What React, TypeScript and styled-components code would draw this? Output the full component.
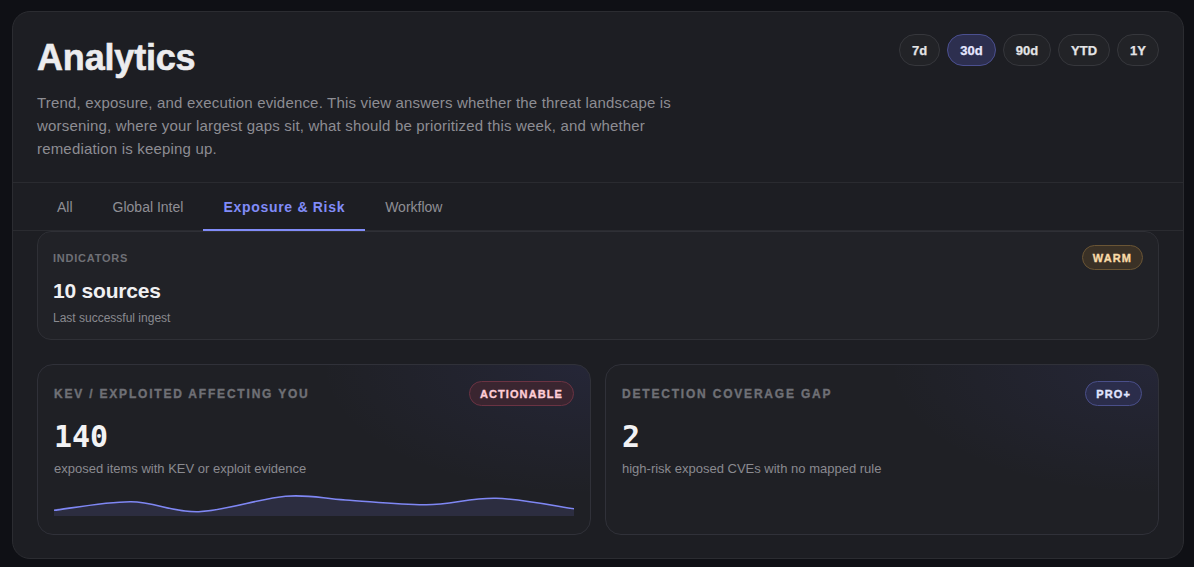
import React from "react";
import styled, { createGlobalStyle } from "styled-components";

const GlobalStyle = createGlobalStyle`
  * { box-sizing: border-box; }
  html, body { margin: 0; padding: 0; background: #0f1015; }
  body {
    font-family: "Liberation Sans", Arial, Helvetica, sans-serif;
    color: #e8e8ea;
    -webkit-font-smoothing: antialiased;
  }
`;

const Page = styled.div`
  padding: 11px 10px 8px 12px;
`;

const Panel = styled.section`
  background: #1d1e23;
  border: 1px solid #2b2c31;
  border-radius: 18px;
  overflow: hidden;
`;

const Header = styled.header`
  display: flex;
  justify-content: space-between;
  align-items: flex-start;
  padding: 22px 24px 22px 24px;
  border-bottom: 1px solid #2a2b30;
`;

const TitleBlock = styled.div`
  margin-top: 4px;
`;

const Title = styled.h1`
  margin: 0;
  font-size: 36px;
  line-height: 40px;
  font-weight: 800;
  letter-spacing: -0.005em;
  color: #ececee;
  -webkit-text-stroke: 0.6px #ececee;
`;

const Lead = styled.p`
  margin: 13px 0 0 0;
  max-width: 680px;
  font-size: 15px;
  line-height: 23px;
  letter-spacing: 0.012em;
  color: #8d8d93;
`;

const Ranges = styled.div`
  display: flex;
  gap: 7px;
`;

const RangeButton = styled.button<{ $active?: boolean }>`
  height: 32px;
  padding: 0 12px;
  border-radius: 16px;
  font-family: inherit;
  font-size: 13px;
  font-weight: 700;
  color: ${(p) => (p.$active ? "#e6e7ff" : "#e4e4e6")};
  -webkit-text-stroke: 0.25px currentColor;
  background: ${(p) => (p.$active ? "#2d2f4f" : "#222327")};
  border: 1px solid ${(p) => (p.$active ? "#4b5090" : "#36373c")};
  cursor: pointer;
`;

const TabBar = styled.nav`
  display: flex;
  padding: 0 24px;
  border-bottom: 1px solid #2a2b30;
`;

const Tab = styled.button<{ $active?: boolean }>`
  padding: 15px 20px 13px 20px;
  margin-bottom: -1px;
  background: none;
  border: none;
  border-bottom: 2px solid ${(p) => (p.$active ? "#818cf8" : "transparent")};
  font-family: inherit;
  font-size: 14px;
  line-height: 18px;
  font-weight: ${(p) => (p.$active ? 700 : 400)};
  letter-spacing: ${(p) => (p.$active ? "0.05em" : "0")};
  color: ${(p) => (p.$active ? "#818cf8" : "#8f8f95")};
  cursor: pointer;
`;

const Content = styled.div`
  display: flex;
  flex-direction: column;
  gap: 24px;
  padding: 0 24px 23px 24px;
`;

const IndicatorCard = styled.div`
  background: #212227;
  border: 1px solid #2f3036;
  border-radius: 14px;
  padding: 13px 15px 13px 15px;
`;

const CardHead = styled.div`
  display: flex;
  justify-content: space-between;
  align-items: center;
  height: 25px;
`;

const SmallLabel = styled.div`
  font-size: 11px;
  line-height: 14px;
  font-weight: 700;
  letter-spacing: 0.07em;
  color: #6f7076;
  text-transform: uppercase;
`;

const HeavyLabel = styled.div`
  font-size: 12px;
  line-height: 14px;
  font-weight: 900;
  letter-spacing: 0.15em;
  color: #6f7076;
  -webkit-text-stroke: 0.35px #6f7076;
  text-transform: uppercase;
`;

type Tone = "warm" | "alert" | "pro";

const toneColors: Record<Tone, { bg: string; border: string; text: string }> = {
  warm: { bg: "#3a3126", border: "#6a5535", text: "#f9dba8" },
  alert: { bg: "#3a2530", border: "#6b3343", text: "#fecdd6" },
  pro: { bg: "#2b2d4b", border: "#4a4f8a", text: "#e0e5ff" },
};

const Pill = styled.span<{ $tone: Tone }>`
  display: inline-flex;
  align-items: center;
  height: 25px;
  padding: 0 10px;
  border-radius: 13px;
  font-size: 11px;
  font-weight: 900;
  letter-spacing: 0.1em;
  color: ${(p) => toneColors[p.$tone].text};
  -webkit-text-stroke: 0.35px ${(p) => toneColors[p.$tone].text};
  background: ${(p) => toneColors[p.$tone].bg};
  border: 1px solid ${(p) => toneColors[p.$tone].border};
`;

const SourceValue = styled.div`
  margin-top: 8px;
  font-size: 21px;
  line-height: 26px;
  font-weight: 700;
  letter-spacing: -0.01em;
  color: #f0f0f2;
`;

const SourceNote = styled.div`
  margin-top: 6px;
  font-size: 12px;
  line-height: 16px;
  color: #8a8a90;
`;

const MetricGrid = styled.div`
  display: grid;
  grid-template-columns: 1fr 1fr;
  gap: 14px;
`;

const MetricCard = styled.div`
  border: 1px solid #303139;
  border-radius: 16px;
  padding: 16px 16px 18px 16px;
  background:
    radial-gradient(ellipse 70% 110% at 100% 0%, rgba(99, 102, 241, 0.09), rgba(99, 102, 241, 0) 70%),
    #1f2025;
`;

const MetricValue = styled.div`
  margin-top: 13px;
  font-family: "DejaVu Sans Mono", "Liberation Mono", monospace;
  font-size: 30px;
  line-height: 36px;
  font-weight: 700;
  color: #f2f2f4;
`;

const MetricNote = styled.div`
  margin-top: 5px;
  font-size: 13px;
  line-height: 18px;
  color: #8a8a90;
`;

const Spark = styled.svg`
  display: block;
  width: 100%;
  height: 22px;
  margin-top: 16px;
`;

// smooth line through the points (Catmull-Rom converted to cubic Béziers)
function smoothPath(pts: [number, number][]): string {
  let d = `M${pts[0][0]},${pts[0][1]}`;
  for (let i = 0; i < pts.length - 1; i++) {
    const p0 = pts[i - 1] || pts[i];
    const p1 = pts[i];
    const p2 = pts[i + 1];
    const p3 = pts[i + 2] || p2;
    const c1x = p1[0] + (p2[0] - p0[0]) / 6;
    const c1y = p1[1] + (p2[1] - p0[1]) / 6;
    const c2x = p2[0] - (p3[0] - p1[0]) / 6;
    const c2y = p2[1] - (p3[1] - p1[1]) / 6;
    d += ` C${c1x.toFixed(1)},${c1y.toFixed(1)} ${c2x.toFixed(1)},${c2y.toFixed(1)} ${p2[0]},${p2[1]}`;
  }
  return d;
}

const trend: [number, number][] = [
  [0, 16.3],
  [77, 7.7],
  [145, 17.7],
  [232, 2.2],
  [292, 6],
  [373, 10.8],
  [443, 4.3],
  [521, 14.7],
];

const Sparkline: React.FC = () => {
  const line = smoothPath(trend);
  const area = `${line} L521,22 L0,22 Z`;
  return (
    <Spark viewBox="0 0 521 22" preserveAspectRatio="none">
      <path d={area} fill="rgba(129, 140, 248, 0.13)" />
      <path d={line} fill="none" stroke="#7f87f4" strokeWidth={1.6} vectorEffect="non-scaling-stroke" />
    </Spark>
  );
};

const ranges = ["7d", "30d", "90d", "YTD", "1Y"];
const tabs = ["All", "Global Intel", "Exposure & Risk", "Workflow"];

export default function App() {
  return (
    <>
      <GlobalStyle />
      <Page>
        <Panel>
          <Header>
            <TitleBlock>
              <Title>Analytics</Title>
              <Lead>
                Trend, exposure, and execution evidence. This view answers whether the threat landscape is
                worsening, where your largest gaps sit, what should be prioritized this week, and whether
                remediation is keeping up.
              </Lead>
            </TitleBlock>
            <Ranges>
              {ranges.map((r) => (
                <RangeButton key={r} $active={r === "30d"}>
                  {r}
                </RangeButton>
              ))}
            </Ranges>
          </Header>

          <TabBar>
            {tabs.map((t) => (
              <Tab key={t} $active={t === "Exposure & Risk"}>
                {t}
              </Tab>
            ))}
          </TabBar>

          <Content>
            <IndicatorCard>
              <CardHead>
                <SmallLabel>Indicators</SmallLabel>
                <Pill $tone="warm">WARM</Pill>
              </CardHead>
              <SourceValue>10 sources</SourceValue>
              <SourceNote>Last successful ingest</SourceNote>
            </IndicatorCard>

            <MetricGrid>
              <MetricCard>
                <CardHead>
                  <HeavyLabel>KEV / Exploited affecting you</HeavyLabel>
                  <Pill $tone="alert">ACTIONABLE</Pill>
                </CardHead>
                <MetricValue>140</MetricValue>
                <MetricNote>exposed items with KEV or exploit evidence</MetricNote>
                <Sparkline />
              </MetricCard>
              <MetricCard>
                <CardHead>
                  <HeavyLabel>Detection coverage gap</HeavyLabel>
                  <Pill $tone="pro">PRO+</Pill>
                </CardHead>
                <MetricValue>2</MetricValue>
                <MetricNote>high-risk exposed CVEs with no mapped rule</MetricNote>
              </MetricCard>
            </MetricGrid>
          </Content>
        </Panel>
      </Page>
    </>
  );
}
